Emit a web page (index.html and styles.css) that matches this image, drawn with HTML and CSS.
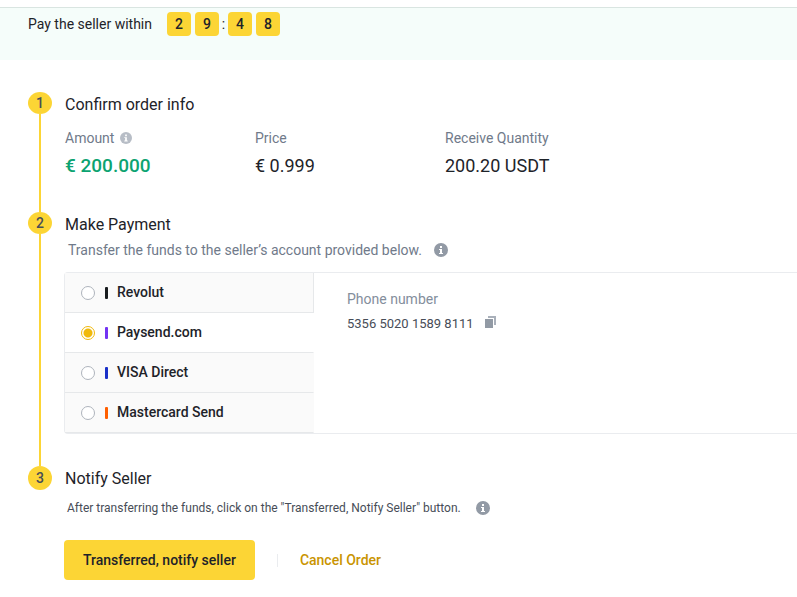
FILE: index.html
```html
<!DOCTYPE html>
<html lang="en">
<head>
<meta charset="utf-8">
<title>Pay the seller</title>
<link rel="stylesheet" href="styles.css">
</head>
<body>
<svg class="sprite" aria-hidden="true">
  <symbol id="info" viewBox="0 0 14 14">
    <circle cx="7" cy="7" r="7" fill="currentColor"/>
    <path d="M6 3h2v2H6zM5 6h3v4h1v1H5v-1h1V7H5z" fill="#fff"/>
  </symbol>
</svg>
<header class="banner">
  <span class="banner-text">Pay the seller within</span>
  <div class="timer" role="timer">
    <span class="digit">2</span><span class="digit">9</span><span class="colon">:</span><span class="digit">4</span><span class="digit">8</span>
  </div>
</header>
<main>
  <ol class="steps">
    <li class="step">
      <div class="rail"><span class="badge badge-short">1</span></div>
      <section class="content">
        <h2>Confirm order info</h2>
        <dl class="facts">
          <div><dt>Amount <svg class="info info-small"><use href="#info"/></svg></dt><dd class="amount">€ 200.000</dd></div>
          <div><dt>Price</dt><dd>€ 0.999</dd></div>
          <div><dt>Receive Quantity</dt><dd>200.20 USDT</dd></div>
        </dl>
      </section>
    </li>
    <li class="step">
      <div class="rail"><span class="badge badge-short">2</span></div>
      <section class="content">
        <h2>Make Payment</h2>
        <p class="hint">Transfer the funds to the seller’s account provided below. <svg class="info"><use href="#info"/></svg></p>
        <div class="payment">
          <div class="methods">
            <label class="method"><input type="radio" name="method"><span class="mark revolut"></span><span class="name">Revolut</span></label>
            <label class="method"><input type="radio" name="method" checked><span class="mark paysend"></span><span class="name">Paysend.com</span></label>
            <label class="method"><input type="radio" name="method"><span class="mark visa"></span><span class="name">VISA Direct</span></label>
            <label class="method"><input type="radio" name="method"><span class="mark mastercard"></span><span class="name">Mastercard Send</span></label>
          </div>
          <div class="details">
            <div class="details-label">Phone number</div>
            <div class="details-value">5356 5020 1589 8111
              <button class="copy" type="button" aria-label="Copy"><svg viewBox="0 0 11 12"><path d="M0 3h8v9H0z" fill="#929aa5"/><path d="M3 0h8v9H9V2H3z" fill="#a9b0ba"/></svg></button>
            </div>
          </div>
        </div>
      </section>
    </li>
    <li class="step">
      <div class="rail"><span class="badge">3</span></div>
      <section class="content">
        <h2>Notify Seller</h2>
        <p class="note">After transferring the funds, click on the "Transferred, Notify Seller" button. <svg class="info"><use href="#info"/></svg></p>
        <div class="actions">
          <button class="primary" type="button">Transferred, notify seller</button>
          <span class="divider"></span>
          <button class="cancel" type="button">Cancel Order</button>
        </div>
      </section>
    </li>
  </ol>
</main>
</body>
</html>
```
FILE: styles.css
```css
* { box-sizing: border-box; }
body {
  margin: 0;
  padding-top: 7px;
  background: #fff;
  color: #1e2329;
  font: 14px/20px Roboto, "Liberation Sans", sans-serif;
  overflow-x: hidden;
}
h2, p, dl, dd, ol { margin: 0; padding: 0; }
button { border: 0; padding: 0; background: none; font: inherit; cursor: pointer; }
.sprite { display: none; }

.banner {
  display: flex;
  align-items: flex-start;
  gap: 15px;
  height: 53px;
  padding: 4px 28px 0;
  border-top: 1px solid #d9e5e1;
  background: #f5fdfa;
  line-height: 24px;
}
.timer { display: flex; gap: 4px; }
.digit {
  width: 24px;
  height: 24px;
  border-radius: 4px;
  background: #fcd535;
  text-align: center;
  font-weight: 500;
}
.colon { width: 1px; display: flex; justify-content: center; }

.steps { padding: 32px 0 0 28px; list-style: none; }
.step { display: flex; gap: 12px; }
.rail {
  display: flex;
  flex-direction: column;
  align-items: center;
  flex: 0 0 24px;
}
.step:not(:last-child) .rail::after {
  content: "";
  flex: 1;
  width: 2px;
  background: #fcd535;
}
.badge {
  width: 24px;
  height: 24px;
  border-radius: 50%;
  background: #fcd535;
  color: #474d57;
  font-weight: 500;
  line-height: 24px;
  text-align: center;
}
.badge-short { height: 22px; line-height: 22px; }
.content { flex: 1; min-width: 0; }
h2 { padding-left: 1px; font-size: 16px; font-weight: 400; line-height: 26px; }

.facts {
  display: grid;
  grid-template-columns: repeat(3, 190px);
  padding: 10px 0 34px 1px;
}
.facts dt { color: #707a8a; }
.facts dd { margin-top: 6px; font-size: 18px; line-height: 24px; }
.facts .amount { color: #0ca371; font-size: 19px; font-weight: 500; }
.info { width: 14px; height: 14px; margin-left: 9px; color: #929aa5; vertical-align: -2px; }
.info-small { width: 12px; height: 12px; margin-left: 2px; color: #b7bdc6; vertical-align: -1px; }

.hint { padding: 2px 0 12px 4px; color: #707a8a; }
.payment {
  display: flex;
  margin-bottom: 32px;
  border: 1px solid #eaecef;
  border-right: 0;
  border-radius: 4px 0 0 4px;
}
.methods { flex: 0 0 249px; }
.method {
  display: flex;
  align-items: center;
  height: 40px;
  padding-left: 16px;
  border-bottom: 1px solid #e6e8ea;
  border-right: 1px solid #e6e8ea;
  background: #fafafa;
  font-weight: 500;
}
.name { padding-bottom: 2px; }
.method:has(:checked) { background: #fff; border-right-color: transparent; }
.method:has(:checked) ~ .method { border-right-color: #fafafa; }
.method input {
  appearance: none;
  width: 14px;
  height: 14px;
  margin: 0;
  border: 1px solid #aeb4bc;
  border-radius: 50%;
  background: #fff;
}
.method input:checked { border-color: #f0b90b; background: radial-gradient(circle, #f0b90b 4px, #fff 5px); }
.mark { width: 3px; height: 12px; margin: 0 9px 0 10px; border-radius: 1px; }
.revolut { background: #191c1f; }
.paysend { background: #7333f3; }
.visa { background: #1a30c8; }
.mastercard { background: #ff5f00; }
.details { padding: 16px 33px; }
.details-label { color: #848e9c; }
.details-value { margin-top: 5px; color: #474d57; font-size: 13px; }
.copy { width: 11px; height: 12px; margin-left: 8px; line-height: 0; }
.copy svg { display: block; width: 11px; height: 12px; }

.note { padding: 6px 0 22px 3px; color: #474d57; font-size: 12px; }
.note .info { margin-left: 12px; vertical-align: -3px; }
.actions { display: flex; align-items: center; }
.primary {
  height: 40px;
  padding: 0 19px;
  border-radius: 4px;
  background: #fcd535;
  color: #1e2329;
  font-weight: 500;
}
.divider { width: 1px; height: 13px; margin: 0 22px; background: #eaecef; }
.cancel { color: #c99400; font-weight: 500; }
```
